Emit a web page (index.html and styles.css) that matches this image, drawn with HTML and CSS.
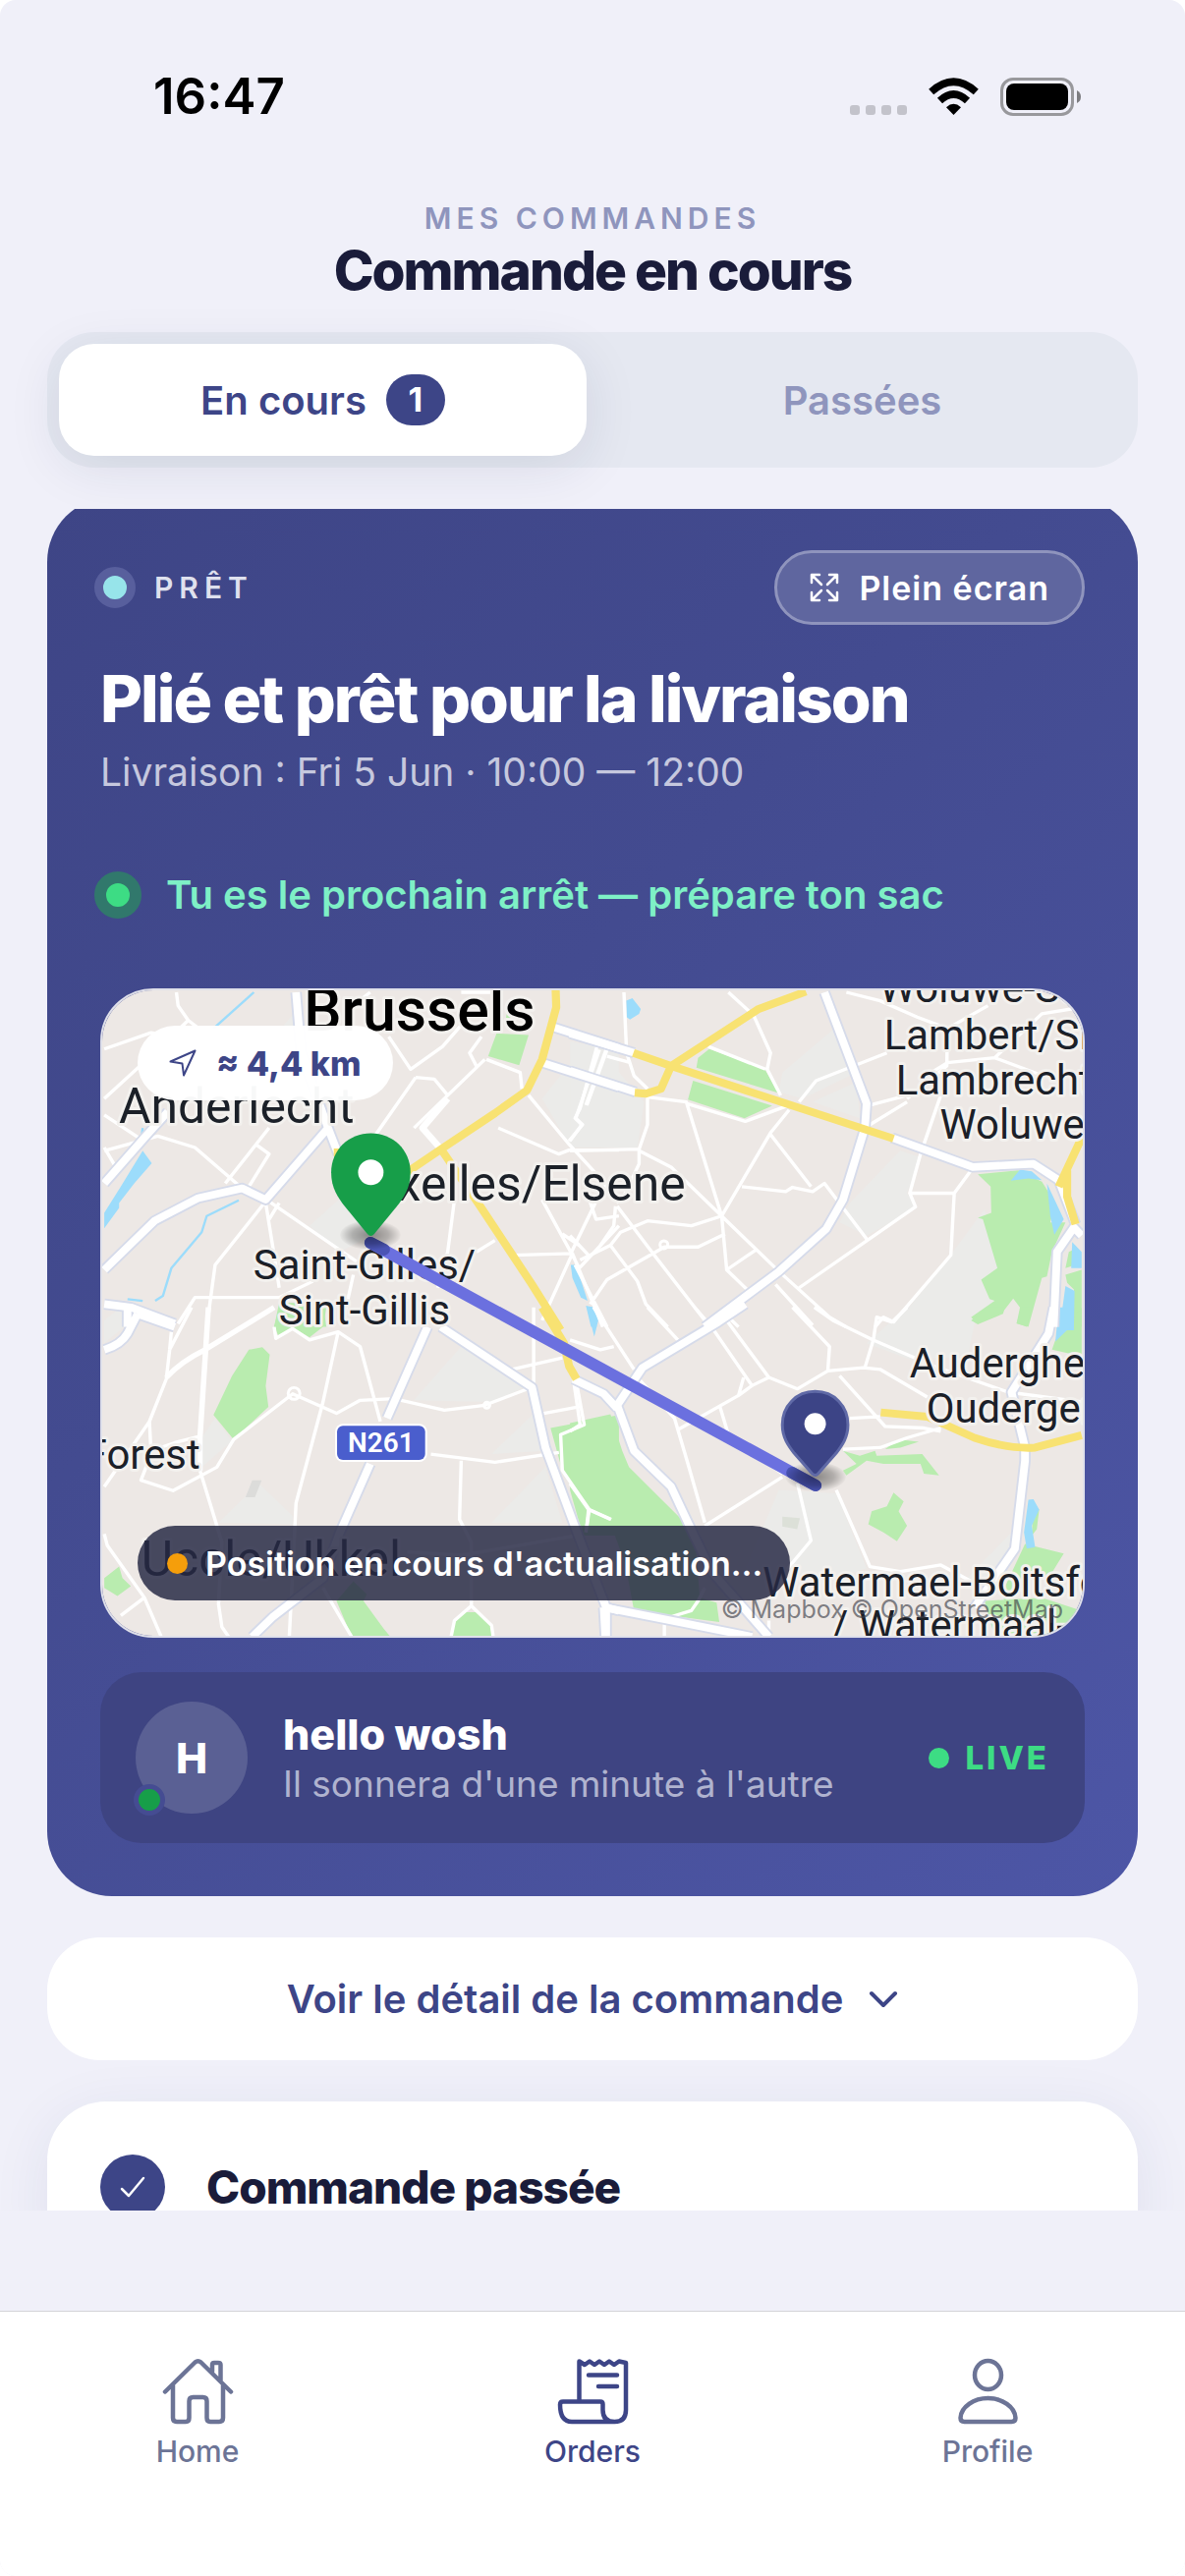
FILE: index.html
```html
<!DOCTYPE html>
<html lang="fr">
<head>
<meta charset="utf-8">
<meta name="viewport" content="width=device-width, initial-scale=1">
<title>Commande en cours</title>
<link rel="stylesheet" href="styles.css">
</head>
<body>
<div class="app">
  <div class="statusbar">
    <span class="clock">16:47</span>
    <div class="indicators">
      <svg width="58" height="39" viewBox="0 0 58 39" fill="#c3c3cb" aria-hidden="true"><rect x="0" y="28" width="10" height="10" rx="3"/><rect x="16" y="28" width="10" height="10" rx="3"/><rect x="32" y="28" width="10" height="10" rx="3"/><rect x="48" y="28" width="10" height="10" rx="3"/></svg>
      <svg width="51" height="39" viewBox="0 0 51 39" aria-hidden="true"><path d="M25.500 38 L18 30.200 Q25.500 23.500 33 30.200Z"/><path d="M11.500 23.500 Q25.500 10.500 39.500 23.500" fill="none" stroke="#000" stroke-width="7.500"/><path d="M2.700 14.500 Q25.500 -6 48.300 14.500" fill="none" stroke="#000" stroke-width="7.500"/></svg>
      <svg width="82" height="39" viewBox="0 0 82 39" aria-hidden="true"><rect x="1.500" y="1.500" width="72" height="36" rx="11.500" fill="none" stroke="#98989c" stroke-width="3"/><rect x="6" y="6" width="63" height="27" rx="8"/><path d="M78 13 Q82 15 82 19.500 Q82 24 78 26Z" fill="#7c7c80"/></svg>
    </div>
  </div>

  <header class="header">
    <p class="eyebrow">MES COMMANDES</p>
    <h1 class="page-title">Commande en cours</h1>
  </header>

  <div class="tabs" role="tablist">
    <button class="tab tab-active" role="tab" aria-selected="true">En cours <span class="count">1</span></button>
    <button class="tab" role="tab" aria-selected="false">Passées</button>
  </div>

  <main class="scroll">
    <div class="stack">
      <section class="tracking">
        <div class="tracking-top">
          <div class="state"><span class="state-dot"></span>PRÊT</div>
          <button class="fullscreen">
            <svg width="30" height="30" viewBox="0 0 30 30" fill="none" stroke="#fff" stroke-width="2.500" stroke-linecap="round" stroke-linejoin="round" aria-hidden="true"><path d="M2 10V2H10M2 2L12 12M20 2H28V10M28 2L18 12M2 20V28H10M2 28L12 18M28 20V28H20M28 28L18 18"/></svg>
            Plein écran
          </button>
        </div>
        <h2 class="headline">Plié et prêt pour la livraison</h2>
        <p class="slot">Livraison : Fri 5 Jun · 10:00 — 12:00</p>
        <p class="next-stop"><span class="next-dot"></span>Tu es le prochain arrêt — prépare ton sac</p>

        <div class="map">
          <svg class="map-canvas" viewBox="0 0 1002 660" preserveAspectRatio="xMidYMid slice" role="img" aria-label="Carte de Bruxelles">
            <defs>
              <path id="major-nw" d="M41 905L190 755L320 685L450 655L520 690L705 470L735 550M705 470L625 240L610 54M41 1010L120 1020L250 1070M41 640L160 500L230 420M1370 160L1568 225M1340 270L1568 345"/>
              <path id="major-ne" d="M755 54L880 395L875 470L810 690L760 780L620 910L400 1080M0 180L190 240M0 295L195 360M955 500L1195 590L1375 580L1450 630M1450 630L1500 765M1518 800L1495 775L1445 850L1435 1080"/>
              <path id="major-sw" d="M41 130Q90 115 110 80L140 20M110 60V0M140 20L250 60M1000 60L880 340M830 480L740 690L690 830L540 950L480 1010M1040 60L1310 245L1350 430L1440 680L1530 920L1568 930M1530 930V1010"/>
              <path id="major-se" d="M520 -10L440 45L215 185L140 300L190 440L300 550L350 660L420 810L590 1010M10 220L100 265L140 310M100 920L300 960L540 1010M100 920L105 1010M1435 0L1420 80L1310 260L1350 430L1350 470L1320 740L1200 920"/>
              <radialGradient id="pin-shadow"><stop offset="0" stop-color="#000" stop-opacity=".42"/><stop offset=".6" stop-color="#000" stop-opacity=".25"/><stop offset="1" stop-color="#000" stop-opacity=".02"/></radialGradient>
            </defs>
            <rect width="1002" height="660" fill="#ede8e5"/>

            <!-- built-up areas -->
            <g fill="#ebebe9">
              <path transform="translate(-12 -16) scale(.3444 .3333)" d="M570 160L610 110L640 160ZM1340 380L1480 200L1568 230V520H1420ZM650 770L780 650L830 800L740 850Z"/>
              <path transform="translate(478 -16) scale(.3444 .3333)" d="M620 360L630 300L790 160L850 300L690 380ZM720 390L850 330L860 440ZM800 760L830 700L980 540L1040 560L1000 670L1030 715L880 800ZM0 205L80 220L220 390L200 530H0ZM960 1080L1100 900L1230 720L1270 900L1220 940L1260 1000L1190 1080Z"/>
              <path transform="translate(-12 324) scale(.3444 .3333)" d="M330 490V400L370 340L420 410ZM960 285L1100 120L1250 190L1300 240L1190 290ZM1190 450L1320 320L1350 440ZM1190 660L1350 490L1400 660ZM380 660L500 540L600 640V665ZM41 40L90 0L100 60L41 110Z"/>
              <path transform="translate(478 324) scale(.3444 .3333)" d="M880 110L1000 0H1210L1180 150L1010 160ZM520 800L620 560L790 570L880 800L700 860ZM1150 860L1310 690L1280 880Z"/>
              <path transform="translate(-12 324) scale(.3444 .3333)" d="M480 530H508L488 582H460Z" fill="#dcdcda"/>
              <path transform="translate(478 324) scale(.3444 .3333)" d="M630 642L682 646L674 680L630 672Z" fill="#dce0d8"/>
            </g>

            <!-- parks -->
            <g fill="#b9ecaf">
              <path transform="translate(-12 -16) scale(.3444 .3333)" d="M1205 180L1300 185L1272 278L1180 250ZM1235 120L1260 140L1230 150ZM560 1005L690 1010L700 1080H545Z"/>
              <path transform="translate(478 -16) scale(.3444 .3333)" d="M413 228L578 290L618 363L375 285L380 255ZM365 325L600 402L518 440L350 383ZM1210 612L1330 600L1400 635L1440 700L1425 760L1470 760L1430 850L1415 925L1400 930L1360 1080L1325 1070L1335 1020L1315 993L1280 1040L1210 1070L1190 1050L1260 1000L1245 995L1220 935L1268 900L1225 750L1210 745L1250 730L1248 650ZM1470 920L1518 905V1080H1495V965L1475 945ZM1480 850L1500 840V890L1470 900Z"/>
              <path transform="translate(-12 324) scale(.3444 .3333)" d="M365 330L420 210L470 130L510 122L532 145L520 240L528 305L425 405ZM560 0H700L690 60L650 92L600 62L560 92L545 60ZM41 830L85 795L95 830L120 855L80 885L41 860ZM730 900L780 840L820 880L810 900L870 985L890 1010H775ZM1070 1010L1085 955L1110 935H1150L1190 975V1010ZM1365 370L1568 330V700H1460L1455 600L1400 500Z"/>
              <path transform="translate(478 324) scale(.3444 .3333)" d="M0 355L120 328L155 440L175 490L370 690L385 890L435 905L443 965L300 945L190 930L165 790L130 690L30 670L0 560ZM1190 40L1240 0H1290L1285 20L1210 52ZM1325 48L1340 0H1372L1355 60ZM1430 130L1440 100L1518 0V150ZM935 435L975 405L1035 412L980 430ZM810 440L860 455L905 440L910 455L1045 450L1095 515L1050 510L1040 480L930 480L880 470L820 515L810 500L850 480ZM885 665L895 625L940 610L960 568L990 595L975 625L1000 670L970 717L930 690ZM1350 725L1465 755L1420 830L1370 815L1290 900L1280 880ZM1375 600L1392 620L1385 680L1370 700ZM1230 900L1400 890L1518 930V1010H1260Z"/>
            </g>

            <!-- water -->
            <g fill="#9cdcfb">
              <path transform="translate(-12 -16) scale(.3444 .3333)" d="M155 540L182 578L130 640L85 700V715L41 778V730L90 650ZM1425 890H1440L1475 1000L1455 990L1430 930ZM1470 1015L1495 1020L1502 1080H1485Z"/>
              <path transform="translate(478 -16) scale(.3444 .3333)" d="M167 80L185 72L210 105L205 120L178 138L168 130ZM1308 632L1335 598L1370 603L1400 630L1360 625ZM1415 640L1465 750L1437 797L1425 740ZM1490 820L1518 850V900H1487ZM1470 955L1497 970L1495 1090H1452Z"/>
              <path transform="translate(478 324) scale(.3444 .3333)" d="M1450 0H1495V50L1440 105ZM1360 590L1375 588L1392 620L1370 670L1380 735L1355 740L1347 690ZM50 0H80L84 40L72 90Z"/>
              <path transform="translate(-12 -16) scale(.3444 .3333)" d="M485 54L365 165M440 692L345 740L330 790L240 900L215 985L192 1000M110 995L155 1000M155 470L150 510" fill="none" stroke="#9cdcfb" stroke-width="7"/>
            </g>

            <!-- local streets -->
            <g fill="none" stroke="#fff" stroke-width="10" stroke-linejoin="round">
              <path transform="translate(-12 -16) scale(.3444 .3333)" d="M255 54L260 95L290 140L200 230L41 380M290 140L340 180M41 228L180 178L260 190M830 54L760 110M885 190L950 290L1045 220L1125 125M1160 190L1125 240L1145 280M1170 260L1060 370L960 470M1175 260L1275 300L1280 350M1300 370L1420 520L1500 610L1568 700M965 315L840 500M965 315L1020 320L1060 370M1210 470L1390 550L1420 538H1568M1510 230L1440 440L1460 460L1420 510M1530 230L1470 400M41 430L150 505M41 540L200 495L310 530L450 655M41 530L75 590M530 470L400 640M490 520L530 550L470 650M520 695L370 890L345 1080M520 700L545 860L560 960M530 695L790 880M660 940L560 990H310L260 1070M1080 690L1060 850L1030 960M1340 690L1430 860L1450 900L1568 770M1200 815L1145 850M1250 860L1430 855L1340 1060M1430 855L1520 1080M1400 795L1450 830M780 920L750 1060M1480 690L1500 750L1568 740M560 700L530 750M1220 54L1100 54"/>
              <path transform="translate(-12 -16) scale(.3444 .3333)" d="M1060 380L985 470L1040 535" stroke-width="20"/>
              <path transform="translate(478 -16) scale(.3444 .3333)" d="M160 54L168 240L190 310L230 350M110 250L180 270M80 220L30 410L15 440L35 460L0 510M110 230L50 400M0 540L205 535L230 460V375L345 390L450 740M205 535V580L150 700M205 540L300 590L450 740M470 54L545 125L595 240L585 290L625 370M410 220L580 290M345 395L520 450L650 400M650 415L595 485L450 740M595 490L715 650M680 390L730 325L940 240M820 54L920 80L1030 130L1120 165L1240 95M1120 165L1118 280L1000 380M1040 320L1120 270L1260 255L1400 120L1518 100M1260 255L1390 305M890 400L1000 370M890 460L1000 390M1100 370L1040 550L1008 670H1140L1190 600M1008 670L1025 712L680 960M1140 670L1130 860L960 1065L930 1050L905 1080M510 650L640 665L660 652L720 665L755 640L880 810M450 740L465 905L530 970M465 905L550 845M450 740L620 910L770 1050L820 1080M450 740L360 770L230 755L150 790L120 830L30 875M460 795L380 835H280L110 935L60 1010M120 830L200 940L225 1010L290 1080M140 710L250 860L400 1060M75 700L0 860M0 800L55 860M610 950L720 1075M135 710L130 770L90 830M470 1050L500 1080M15 890L110 1080"/>
              <path transform="translate(-12 324) scale(.3444 .3333)" d="M300 0L235 130L225 220L175 350L180 450L150 530L245 562L375 490L425 405L600 265L730 325L800 285L900 280L1050 315L1170 300L1310 245M325 500L390 720L380 910L390 980L410 1010M175 350L41 550M240 75L235 130M180 440L250 415L325 395M545 60L550 95L600 65L650 100L735 75L800 120L860 350M735 75L690 290L610 600L590 1010M1100 470L1095 650L1130 720V915L1190 975L1195 1010M1130 915L1080 960L1070 1010M1010 450L1200 475L1390 445M1250 190L1400 155M1315 0V240M1345 325L1450 305M1440 220L1465 360L1395 390L1400 500L1480 620L1545 650M1480 620L1470 690M41 695L50 730L160 890L210 1010M160 890L90 945M690 860L775 1010M940 750L1100 760L1440 700"/>
              <path transform="translate(-12 324) scale(.3444 .3333)" d="M350 0L325 400V500M545 0L340 130Q270 165 225 215" stroke-width="16"/>
              <circle cx="196" cy="412" r="6" stroke-width="3"/><circle cx="393" cy="424" r="3" stroke-width="3"/><circle cx="574" cy="260" r="4" stroke-width="3"/>
              <path transform="translate(478 324) scale(.3444 .3333)" d="M70 0L190 190M370 0L420 60L540 240L500 270L320 375M230 0L320 100M465 40L590 215L675 250L765 195L770 120L660 0M500 270L515 215M590 215L540 240M725 0L780 40L900 100L1080 180L1300 260L1518 290M900 100L875 185M765 195L870 185L920 190L1060 275M800 210L935 365L1050 370L1100 380M1000 0L955 45L910 30L900 100M1100 370L1000 400L920 430L810 435M830 340L920 335M205 220L310 340L350 480L400 660M445 305L470 390L630 510M400 670L630 520M675 540L715 715L590 870M790 560L850 700L890 795L980 810L1100 790L1190 840M0 100L90 130L130 120M10 220L30 360L0 380M400 860L380 900L360 930L280 955V1010M590 960V1010M0 540L55 620L50 670M55 620L120 650"/>
            </g>

            <!-- main roads: casing, then surface -->
            <g fill="none" stroke="#d6dbea" stroke-width="34" stroke-linejoin="round">
              <use href="#major-nw" transform="translate(-12 -16) scale(.3444 .3333)"/>
              <use href="#major-ne" transform="translate(478 -16) scale(.3444 .3333)"/>
              <use href="#major-sw" transform="translate(-12 324) scale(.3444 .3333)"/>
              <use href="#major-se" transform="translate(478 324) scale(.3444 .3333)"/>
            </g>
            <g fill="none" stroke="#fff" stroke-width="23" stroke-linejoin="round">
              <use href="#major-nw" transform="translate(-12 -16) scale(.3444 .3333)"/>
              <use href="#major-ne" transform="translate(478 -16) scale(.3444 .3333)"/>
              <use href="#major-sw" transform="translate(-12 324) scale(.3444 .3333)"/>
              <use href="#major-se" transform="translate(478 324) scale(.3444 .3333)"/>
            </g>
            <g fill="none" stroke="#f8e272" stroke-width="24" stroke-linejoin="round">
              <path transform="translate(-12 -16) scale(.3444 .3333)" d="M1380 40L1382 100L1340 260L1295 355L1200 425L1040 535L940 605M1040 535L1150 700L1310 950L1395 1090M722 545H742"/>
              <path transform="translate(478 -16) scale(.3444 .3333)" d="M188 240L300 280L960 503M192 362L225 365L270 350L300 280L560 105L700 52M1518 500L1450 650M1475 600V680L1500 765"/>
              <path transform="translate(-12 324) scale(.3444 .3333)" d="M1340 0L1405 110L1420 180L1442 220"/>
              <path transform="translate(478 324) scale(.3444 .3333)" d="M922 322L1060 335L1200 400Q1300 435 1380 430L1518 392"/>
            </g>

            <g class="place">
              <text class="place-city" x="206" y="41">Brussels</text>
              <text class="place-big" x="17" y="136">Anderlecht</text>
              <text class="place-big" x="596" y="215" text-anchor="end">Ixelles/Elsene</text>
              <text x="268" y="295" text-anchor="middle">Saint-Gilles/</text>
              <text x="268" y="341" text-anchor="middle">Sint-Gillis</text>
              <text x="100" y="489" text-anchor="end">Forest</text>
              <text class="place-big" x="40" y="598">Uccle/Ukkel</text>
              <text x="794" y="12">Woluwe-Saint-</text>
              <text x="799" y="60">Lambert/Sint-</text>
              <text x="811" y="106">Lambrechts-</text>
              <text x="856" y="152">Woluwe</text>
              <text x="825" y="396">Auderghem/</text>
              <text x="842" y="442">Oudergem</text>
              <text x="675" y="619">Watermael-Boitsfort</text>
              <text x="745" y="664">/ Watermaal-</text>
            </g>

            <rect x="238" y="443" width="94" height="39" rx="8" fill="#fff"/>
            <rect x="240" y="445" width="90" height="35" rx="6" fill="#4a5ecd"/>
            <text class="shield" x="285" y="472" text-anchor="middle">N261</text>

            <path d="M274 258L729 506" stroke="#6b70df" stroke-width="12" stroke-linecap="round"/>
            <path d="M274 258L288 265M705 493L729 506" stroke="#4a54b4" stroke-width="12" stroke-linecap="round"/>
            <ellipse cx="274" cy="250" rx="31" ry="15" fill="url(#pin-shadow)"/>
            <ellipse cx="729" cy="497" rx="31" ry="15" fill="url(#pin-shadow)"/>
            <path d="M274.500 146C252 146 234 163 234 186C234 202 241 212 248 221L271 249Q274.500 253 278 249L301 221C308 212 315 202 315 186C315 163 297 146 274.500 146Z" fill="#179e49"/>
            <circle cx="274.500" cy="186" r="13" fill="#fff"/>
            <path d="M728.500 410C709 410 695 425 695 444C695 457 701 465 707 473L725.500 494Q728.500 497 731.500 494L750 473C756 465 762 457 762 444C762 425 748 410 728.500 410Z" fill="#3c4486" stroke="#5f69a6" stroke-width="3"/>
            <circle cx="728.500" cy="443" r="11" fill="#fff"/>
          </svg>
          <div class="chip chip-distance">
            <svg width="28" height="28" viewBox="0 0 28 28" fill="none" stroke="#3d4587" stroke-width="2" stroke-linejoin="round" aria-hidden="true"><path d="M26.500 1.500L1.500 12.500L13.500 14.500L15 26.500Z"/></svg>
            ≈ 4,4 km
          </div>
          <div class="chip chip-position"><span class="amber-dot"></span>Position en cours d'actualisation…</div>
          <p class="credits">© Mapbox © OpenStreetMap</p>
        </div>

        <div class="courier">
          <div class="avatar">H<span class="presence"></span></div>
          <div class="courier-text">
            <p class="courier-name">hello wosh</p>
            <p class="courier-note">Il sonnera d'une minute à l'autre</p>
          </div>
          <p class="live"><span class="live-dot"></span>LIVE</p>
        </div>
      </section>

      <button class="details">
        Voir le détail de la commande
        <svg width="30" height="18" viewBox="0 0 30 18" fill="none" stroke="#3d4587" stroke-width="4" stroke-linecap="round" stroke-linejoin="round" aria-hidden="true"><path d="M3 3L15 15L27 3"/></svg>
      </button>

      <section class="timeline">
        <span class="step-mark"><svg width="26" height="22" viewBox="0 0 26 22" fill="none" stroke="#fff" stroke-width="2.500" stroke-linecap="round" stroke-linejoin="round" aria-hidden="true"><path d="M2 13L9 20L24 2"/></svg></span>
        <h3 class="step-title">Commande passée</h3>
      </section>
    </div>
  </main>

  <nav class="nav">
    <a class="nav-item" href="#home">
      <svg width="73" height="68" viewBox="0 0 73 68" fill="none" stroke="currentColor" stroke-width="4.500" stroke-linecap="round" stroke-linejoin="round" aria-hidden="true"><path d="M3 34.500L33.500 4.500Q36.500 2 39.500 4.500L70 34.500M11 28V61Q11 65 15 65H24Q27.500 65 27.500 61V44Q27.500 40 31.500 40H41.500Q45.500 40 45.500 44V61Q45.500 65 49 65H58Q62 65 62 61V28M51 14V7Q51 5 53 5H57Q59.500 5 59.500 7V23"/></svg>
      Home
    </a>
    <a class="nav-item nav-current" href="#orders" aria-current="page">
      <svg width="73" height="68" viewBox="0 0 73 68" fill="none" stroke="currentColor" stroke-width="4.500" stroke-linecap="round" stroke-linejoin="round" aria-hidden="true"><path d="M22.500 44V3.500L28 7L33 3.500L38 7L43 3.500L48 7L53 3.500L58 7L63 3.500L70 5V53Q70 65 58.500 65Q46.500 65 46.500 53V47Q46.500 44.500 44 44.500H6Q3 44.500 3 47.500Q3 65 15 65H58M32 17.500H61M42 29H61"/></svg>
      Orders
    </a>
    <a class="nav-item" href="#profile">
      <svg width="73" height="68" viewBox="0 0 73 68" fill="none" stroke="currentColor" stroke-width="4.500" stroke-linecap="round" stroke-linejoin="round" aria-hidden="true"><ellipse cx="36.500" cy="17.500" rx="13.500" ry="14.500"/><path d="M36.500 41C22 41 9 50 8.500 61Q8.500 65 12.500 65H60.500Q64.500 65 64.500 61C64 50 51 41 36.500 41Z"/></svg>
      Profile
    </a>
  </nav>
</div>
</body>
</html>
```
FILE: styles.css
```css
:root {
  --indigo: #3d4587;
  --ink: #1a1c3a;
  --muted: #8f95bd;
  --page: #f0f0f9;
  --green: #3ddc84;
}

* { box-sizing: border-box; }

html { background: #fff; }

body {
  margin: 0;
  font-family: Inter, "Liberation Sans", sans-serif;
  color: var(--ink);
}

h1, h2, h3, p { margin: 0; }

button {
  font: inherit;
  border: 0;
  margin: 0;
  cursor: pointer;
}

.app {
  display: flex;
  flex-direction: column;
  height: 100vh;
  background: var(--page);
  border-radius: 16px;
  overflow: hidden;
}

.statusbar {
  display: flex;
  justify-content: space-between;
  align-items: center;
  padding: 68px 106px 76px 156px;
}

.clock {
  font-size: 51px;
  line-height: 60px;
  font-weight: 600;
  color: #000;
}

.indicators {
  display: flex;
  gap: 22px;
}

.header {
  display: flex;
  flex-direction: column;
  align-items: center;
  gap: 3px;
}

.eyebrow {
  font-size: 30px;
  line-height: 36px;
  font-weight: 600;
  letter-spacing: 5px;
  color: var(--muted);
}

.page-title {
  font-size: 55px;
  line-height: 64px;
  font-weight: 800;
  letter-spacing: -2px;
}

.tabs {
  display: flex;
  gap: 12px;
  margin: 31px 48px 42px;
  padding: 12px;
  background: #e5e8f1;
  border-radius: 48px;
}

.tab {
  flex: 1;
  display: flex;
  align-items: center;
  justify-content: center;
  gap: 20px;
  height: 114px;
  background: transparent;
  border-radius: 36px;
  font-size: 40px;
  font-weight: 600;
  color: var(--muted);
}

.tab-active {
  background: #fff;
  color: var(--indigo);
  box-shadow: 0 12px 54px rgba(30, 35, 80, 0.1);
}

.count {
  display: grid;
  place-items: center;
  width: 60px;
  height: 52px;
  border-radius: 26px;
  background: var(--indigo);
  color: #fff;
  font-size: 34px;
  line-height: 40px;
  font-weight: 700;
}

.scroll {
  flex: 1 1 0;
  min-height: 0;
  overflow: hidden auto;
  scrollbar-width: none;
  position: relative;
}

.stack {
  display: flex;
  flex-direction: column;
  gap: 42px;
  margin-top: -12px;
  padding: 0 48px;
}

.tracking {
  padding: 54px;
  border-radius: 66px;
  background: linear-gradient(135deg, #3e4586 0%, #434b90 40%, #4d56a6 100%);
  color: #fff;
}

.tracking-top {
  display: flex;
  align-items: center;
  justify-content: space-between;
}

.state,
.next-stop {
  display: flex;
  align-items: center;
  margin-left: -6px;
}

.state {
  gap: 19px;
  font-size: 30px;
  font-weight: 600;
  letter-spacing: 6px;
  color: #dfe1ee;
}

.state-dot {
  width: 42px;
  height: 42px;
  border: 9px solid #585f9d;
  border-radius: 50%;
  background: #97e4ea;
}

.fullscreen {
  display: flex;
  align-items: center;
  gap: 20px;
  height: 76px;
  padding: 0 33px;
  border: 3px solid #8f94bd;
  border-radius: 38px;
  background: #5f669f;
  color: #fff;
  font-size: 34px;
  font-weight: 600;
  letter-spacing: 1px;
}

.headline {
  margin-top: 36px;
  font-size: 66px;
  line-height: 78px;
  font-weight: 800;
  letter-spacing: -2px;
}

.slot {
  margin-top: 9px;
  font-size: 39px;
  line-height: 54px;
  color: #c6c8de;
}

.next-stop {
  gap: 25px;
  margin-top: 71px;
  font-size: 40px;
  line-height: 54px;
  font-weight: 600;
  color: #7ef0c6;
}

.next-dot {
  width: 48px;
  height: 48px;
  border: 12px solid #31786c;
  border-radius: 50%;
  background: var(--green);
}

.map {
  position: relative;
  margin-top: 68px;
  border: 2px solid #dfe0ea;
  border-radius: 54px;
  overflow: hidden;
}

.map-canvas {
  display: block;
  width: 100%;
  height: auto;
}

.place {
  font-family: Roboto, "Liberation Sans", sans-serif;
  font-size: 42px;
  fill: #1b2028;
  stroke: #f3f1ee;
  stroke-width: 6px;
  stroke-linejoin: round;
  paint-order: stroke;
}

.place-city {
  font-size: 61px;
  font-weight: 500;
  fill: #000;
}

.place-big { font-size: 50px; }

.shield {
  font-family: Roboto, "Liberation Sans", sans-serif;
  font-size: 28px;
  font-weight: 600;
  fill: #fff;
}

.chip {
  position: absolute;
  left: 36px;
  display: flex;
  align-items: center;
  height: 76px;
  padding: 0 32px;
  border-radius: 38px;
  font-size: 34px;
  white-space: nowrap;
}

.chip-distance {
  top: 36px;
  gap: 20px;
  background: rgba(255, 255, 255, 0.97);
  color: var(--indigo);
  font-weight: 800;
}

.chip-position {
  bottom: 36px;
  gap: 18px;
  padding: 0 28px 0 30px;
  background: rgba(38, 40, 68, 0.84);
  color: #fff;
  font-weight: 600;
}

.amber-dot,
.live-dot {
  width: 21px;
  height: 21px;
  border-radius: 50%;
}

.amber-dot { background: #f59e0b; }

.credits {
  position: absolute;
  right: 20px;
  bottom: 10px;
  font-size: 25px;
  line-height: 33px;
  color: rgba(60, 62, 72, 0.65);
}

.courier {
  display: flex;
  align-items: center;
  gap: 36px;
  margin-top: 35px;
  padding: 30px 36px;
  border-radius: 42px;
  background: #3e4482;
}

.avatar {
  position: relative;
  display: grid;
  place-items: center;
  width: 114px;
  height: 114px;
  border-radius: 50%;
  background: #5a6094;
  font-size: 43px;
  font-weight: 800;
}

.presence {
  position: absolute;
  left: -2px;
  bottom: -2px;
  width: 32px;
  height: 32px;
  border: 5px solid #454c92;
  border-radius: 50%;
  background: #179e49;
}

.courier-text { flex: 1; }

.courier-name {
  font-size: 43px;
  line-height: 54px;
  font-weight: 800;
}

.courier-note {
  font-size: 37px;
  line-height: 48px;
  color: #b0b3cf;
}

.live {
  display: flex;
  align-items: center;
  gap: 16px;
  font-size: 33px;
  font-weight: 800;
  letter-spacing: 3px;
  color: var(--green);
}

.live-dot { background: var(--green); }

.details {
  display: flex;
  align-items: center;
  justify-content: center;
  gap: 26px;
  height: 125px;
  border-radius: 54px;
  background: #fff;
  color: var(--indigo);
  font-size: 40px;
  font-weight: 600;
}

.timeline {
  display: flex;
  align-items: center;
  gap: 42px;
  padding: 54px;
  border-radius: 60px;
  background: #fff;
  box-shadow: 0 12px 60px rgba(40, 45, 110, 0.08);
}

.step-mark {
  display: grid;
  place-items: center;
  width: 66px;
  height: 66px;
  border-radius: 50%;
  background: var(--indigo);
}

.step-title {
  font-size: 46px;
  line-height: 60px;
  font-weight: 800;
  letter-spacing: -1px;
}

.nav {
  display: flex;
  margin-top: 102px;
  padding: 47px 0 109px;
  border-top: 1px solid #d4d4d8;
  background: #fff;
}

.nav-item {
  flex: 1;
  display: flex;
  flex-direction: column;
  align-items: center;
  gap: 9px;
  font-size: 30px;
  line-height: 36px;
  font-weight: 500;
  color: #6c7496;
  text-decoration: none;
}

.nav-current { color: var(--indigo); }
```
